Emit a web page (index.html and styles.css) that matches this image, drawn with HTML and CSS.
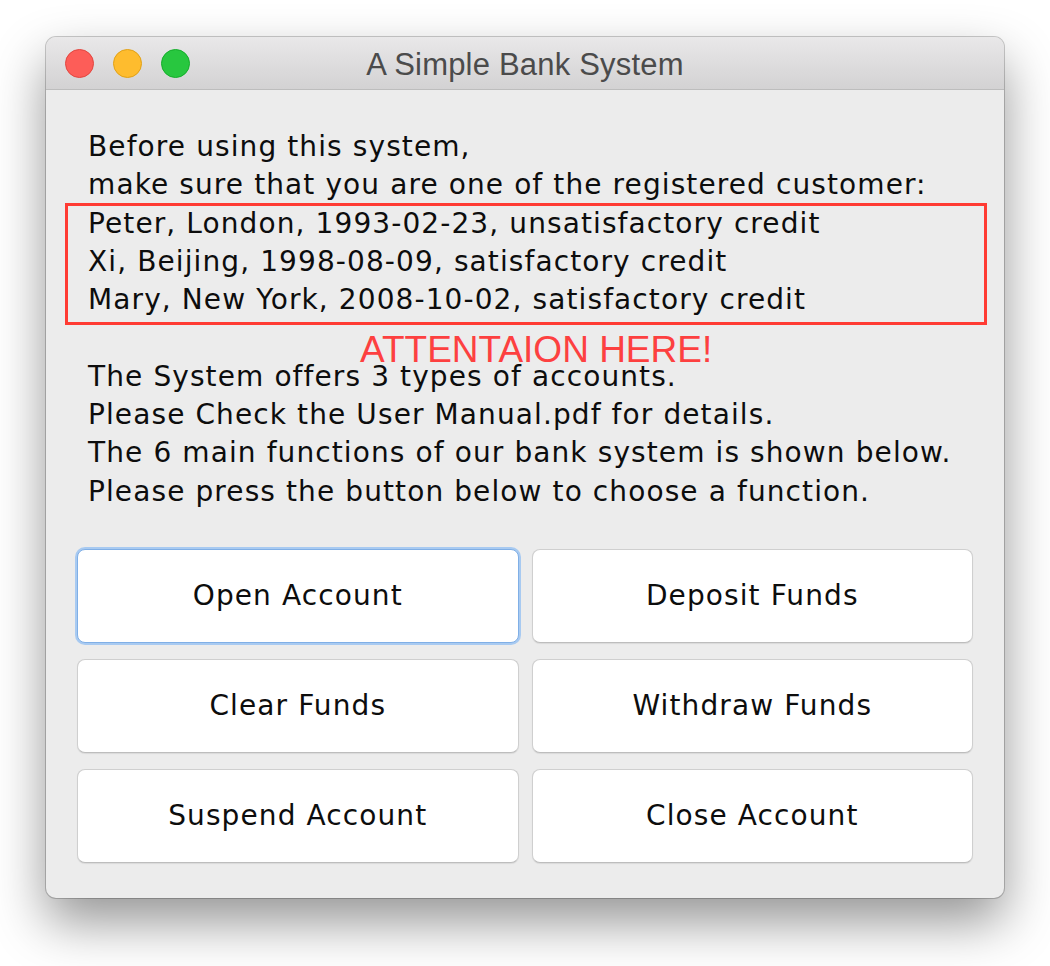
FILE: index.html
```html
<!DOCTYPE html>
<html lang="en">
<head>
<meta charset="utf-8">
<title>A Simple Bank System</title>
<link rel="stylesheet" href="styles.css">
</head>
<body>
<div class="stage">
  <div class="window">
    <div class="titlebar">
      <div class="lights">
        <span class="light red"></span>
        <span class="light yellow"></span>
        <span class="light green"></span>
      </div>
      <div class="title">A Simple Bank System</div>
    </div>
    <div class="content">
      <div class="info">
        <p class="line">Before using this system,</p>
        <p class="line">make sure that you are one of the registered customer:</p>
        <p class="line">Peter, London, 1993-02-23, unsatisfactory credit</p>
        <p class="line">Xi, Beijing, 1998-08-09, satisfactory credit</p>
        <p class="line">Mary, New York, 2008-10-02, satisfactory credit</p>
        <p class="line blank">&nbsp;</p>
        <p class="line">The System offers 3 types of accounts.</p>
        <p class="line">Please Check the User Manual.pdf for details.</p>
        <p class="line">The 6 main functions of our bank system is shown below.</p>
        <p class="line">Please press the button below to choose a function.</p>
        <div class="highlight-box"></div>
        <div class="attention">ATTENTAION HERE!</div>
      </div>
      <div class="buttons">
        <button class="btn focused">Open Account</button>
        <button class="btn">Deposit Funds</button>
        <button class="btn">Clear Funds</button>
        <button class="btn">Withdraw Funds</button>
        <button class="btn">Suspend Account</button>
        <button class="btn">Close Account</button>
      </div>
    </div>
  </div>
</div>
</body>
</html>
```

FILE: styles.css
```css
html, body {
  margin: 0;
  padding: 0;
  background: #ffffff;
}

.stage {
  padding: 37px 46px 0 46px;
  height: 966px;
  box-sizing: border-box;
  overflow: hidden;
}

.window {
  height: 861px;
  box-sizing: border-box;
  border-radius: 10px;
  background: #ececec;
  box-shadow: 0 0 0 1px rgba(0, 0, 0, 0.2), 0 24px 52px rgba(0, 0, 0, 0.42);
  overflow: hidden;
  display: flex;
  flex-direction: column;
}

.titlebar {
  height: 52px;
  flex: none;
  position: relative;
  display: flex;
  align-items: center;
  justify-content: center;
  background: linear-gradient(#e9e8e9, #d3d2d3);
  border-bottom: 1px solid #bdbdbd;
}

.lights {
  position: absolute;
  left: 19px;
  top: 0;
  bottom: 0;
  display: flex;
  align-items: center;
  gap: 19px;
}

.light {
  width: 29px;
  height: 29px;
  border-radius: 50%;
  box-sizing: border-box;
}

.red { background: #fd5d58; border: 1px solid #e2463f; }
.yellow { background: #febc2e; border: 1px solid #e1a116; }
.green { background: #28c73f; border: 1px solid #14ae2a; }

.title {
  font-family: "Liberation Sans", Arial, sans-serif;
  font-size: 31px;
  color: #4b4b4b;
  line-height: 1;
  padding-top: 3px;
  letter-spacing: 0.2px;
}

.content {
  flex: 1;
  padding: 38px 31px 0 31px;
  display: flex;
  flex-direction: column;
}

.info {
  position: relative;
  padding-left: 11px;
  font-family: "DejaVu Sans", Verdana, sans-serif;
  font-size: 28px;
  letter-spacing: 1.1px;
  color: #0d0d0d;
}

.line {
  margin: 0;
  height: 38.3px;
  line-height: 38.3px;
  white-space: nowrap;
}

.highlight-box {
  position: absolute;
  left: -12px;
  top: 75px;
  width: 922px;
  height: 122px;
  box-sizing: border-box;
  border: 3px solid #ff3b33;
}

.attention {
  position: absolute;
  left: 283px;
  top: 209px;
  font-family: "Liberation Sans", Arial, sans-serif;
  font-size: 37px;
  line-height: 26px;
  letter-spacing: 0;
  color: #fd4040;
  white-space: nowrap;
}

.buttons {
  margin-top: 38px;
  display: grid;
  grid-template-columns: 1fr 1fr;
  grid-auto-rows: 94px;
  column-gap: 13px;
  row-gap: 16px;
}

.btn {
  font-family: "DejaVu Sans", Verdana, sans-serif;
  font-size: 28px;
  letter-spacing: 1.1px;
  color: #0d0d0d;
  background: #ffffff;
  border: 1px solid #cfcfcf;
  border-bottom-color: #bdbdbd;
  border-radius: 8px;
  box-shadow: 0 1px 1px rgba(0, 0, 0, 0.08);
  padding: 0;
  margin: 0;
}

.btn.focused {
  border: 1px solid #80afe6;
  box-shadow: 0 0 0 2px #a8caf1;
}
```
